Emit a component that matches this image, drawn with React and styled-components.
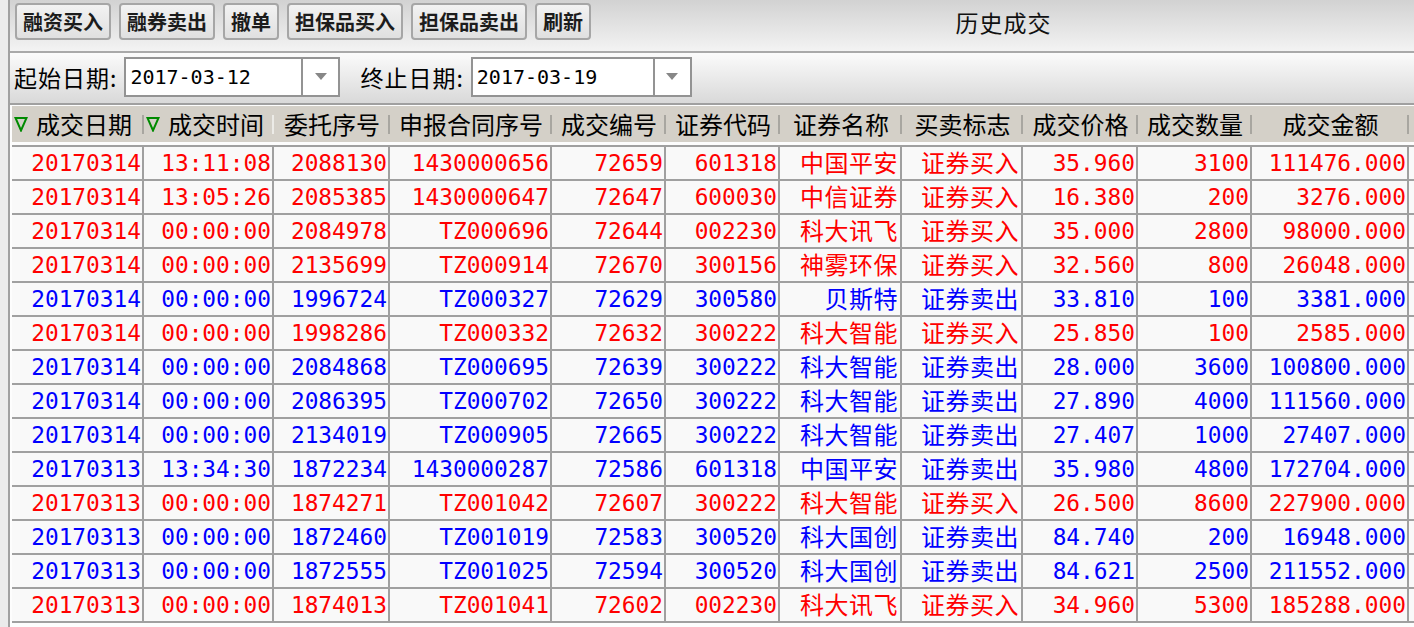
import React from "react";
import styled, { createGlobalStyle } from "styled-components";

const GlobalStyle = createGlobalStyle`
  html, body { margin: 0; padding: 0; background: #ebebeb; }
  body { font-family: "Noto Sans CJK SC", "DejaVu Sans", sans-serif; }
  * { box-sizing: border-box; }
`;

const CJK = `"Noto Sans CJK SC", "DejaVu Sans", sans-serif`;
const MONO = `"DejaVu Sans Mono", "Noto Sans CJK SC", monospace`;

const Page = styled.div`
  margin-left: 8px;
  height: 627px;
  overflow: hidden;
  border-left: 2px solid #a0a0a0;
  display: flex;
  flex-direction: column;
  background: #f4f4f4;
`;

const Toolbar = styled.div`
  height: 53px;
  flex-shrink: 0;
  display: flex;
  align-items: center;
  gap: 8px;
  padding: 0 0 2px 5px;
  background: linear-gradient(#d2d2d2, #f3f3f3);
  border-bottom: 2px solid #a9a9a9;
`;

const ToolButton = styled.button`
  height: 37px;
  padding: 0 6px;
  border: 2px solid #a6a6a6;
  border-radius: 4px;
  background: linear-gradient(#f2f2f2, #e0e0e0);
  font-family: ${CJK};
  font-size: 20px;
  font-weight: 700;
  color: #1c1c1c;
  line-height: 1;
  cursor: pointer;
  margin-bottom: 6px;
`;

const Title = styled.div`
  flex: 1;
  text-align: center;
  font-family: ${CJK};
  font-size: 23px;
  letter-spacing: 1px;
  color: #111;
  margin-bottom: 6px;
  padding-right: 6px;
`;

const DateRow = styled.div`
  height: 52px;
  flex-shrink: 0;
  display: flex;
  align-items: center;
  padding: 0 0 2px 4px;
  background: linear-gradient(#fbfbfb, #d9d9d9);
  border-bottom: 2px solid #a0a0a0;
`;

const DateLabel = styled.span`
  font-family: ${CJK};
  font-size: 23px;
  letter-spacing: 1px;
  color: #000;
  margin-right: 7px;
  margin-left: ${(p) => p.$offset || 0}px;
`;

const Combo = styled.div`
  width: ${(p) => p.$w}px;
  height: 40px;
  display: flex;
  border: 2px solid #939393;
  background: #fff;
`;

const ComboText = styled.div`
  flex: 1;
  display: flex;
  align-items: center;
  padding-left: 4px;
  font-family: ${MONO};
  font-size: 20px;
  color: #000;
  border-right: 2px solid #939393;
`;

const ComboArrow = styled.div`
  width: 35px;
  display: flex;
  align-items: center;
  justify-content: center;
`;

const TableWrap = styled.div`
  flex: 1;
  padding: 1px 0 0 2px;
  background: #fdfdfd;
`;

const cols = "132px 130px 116px 162px 114px 114px 122px 121px 115px 114px 157px 1fr";

const HeaderRow = styled.div`
  display: grid;
  grid-template-columns: ${cols};
  height: 36px;
  background: #d4d0c8;
  margin-bottom: 3px;
`;

const HeaderCell = styled.div`
  position: relative;
  display: flex;
  align-items: center;
  justify-content: ${(p) => (p.$sorted ? "flex-start" : "center")};
  gap: 8px;
  padding-left: ${(p) => (p.$sorted ? "2px" : "0")};
  font-family: ${CJK};
  font-size: 24px;
  line-height: 1;
  color: #000;
  white-space: nowrap;
  &::after {
    content: "";
    position: absolute;
    right: 0;
    top: 9px;
    width: 2px;
    height: 19px;
    background: ${(p) => (p.$light ? "#ecebe7" : "#a8a6a0")};
  }
`;

const Row = styled.div`
  display: grid;
  grid-template-columns: ${cols};
  height: 34px;
  border-top: 2px solid #a0a0a0;
  background: #f9f9f9;
  color: ${(p) => (p.$sell ? "#0000ff" : "#ff0000")};
`;

const Cell = styled.div`
  display: flex;
  align-items: center;
  justify-content: flex-end;
  padding-right: ${(p) => (p.$cjk ? "2px" : "1px")};
  padding-bottom: ${(p) => (p.$cjk ? "3px" : "0")};
  border-right: 2px solid #a0a0a0;
  font-family: ${(p) => (p.$cjk ? CJK : MONO)};
  font-size: ${(p) => (p.$cjk ? "24px" : "22.8px")};
  line-height: 1;
  letter-spacing: ${(p) => (p.$cjk ? "0.5px" : "0")};
  white-space: nowrap;
`;

const EndCell = styled.div``;

const BottomLine = styled.div`
  height: 2px;
  background: #a0a0a0;
`;

const SortIcon = () => (
  <svg width="14" height="16" viewBox="0 0 14 16">
    <polygon points="1.5,2 12.5,2 7,14.5" fill="none" stroke="#008a00" strokeWidth="2" />
  </svg>
);

const DropIcon = () => (
  <svg width="12" height="8" viewBox="0 0 12 8">
    <polygon points="0,0 12,0 6,7" fill="#878787" />
  </svg>
);

const buttons = ["融资买入", "融券卖出", "撤单", "担保品买入", "担保品卖出", "刷新"];

const headers = [
  { t: "成交日期", sorted: true },
  { t: "成交时间", sorted: true, light: true },
  { t: "委托序号" },
  { t: "申报合同序号" },
  { t: "成交编号" },
  { t: "证券代码" },
  { t: "证券名称" },
  { t: "买卖标志" },
  { t: "成交价格" },
  { t: "成交数量" },
  { t: "成交金额" },
];

const data = [
  ["20170314", "13:11:08", "2088130", "1430000656", "72659", "601318", "中国平安", "证券买入", "35.960", "3100", "111476.000"],
  ["20170314", "13:05:26", "2085385", "1430000647", "72647", "600030", "中信证券", "证券买入", "16.380", "200", "3276.000"],
  ["20170314", "00:00:00", "2084978", "TZ000696", "72644", "002230", "科大讯飞", "证券买入", "35.000", "2800", "98000.000"],
  ["20170314", "00:00:00", "2135699", "TZ000914", "72670", "300156", "神雾环保", "证券买入", "32.560", "800", "26048.000"],
  ["20170314", "00:00:00", "1996724", "TZ000327", "72629", "300580", "贝斯特", "证券卖出", "33.810", "100", "3381.000"],
  ["20170314", "00:00:00", "1998286", "TZ000332", "72632", "300222", "科大智能", "证券买入", "25.850", "100", "2585.000"],
  ["20170314", "00:00:00", "2084868", "TZ000695", "72639", "300222", "科大智能", "证券卖出", "28.000", "3600", "100800.000"],
  ["20170314", "00:00:00", "2086395", "TZ000702", "72650", "300222", "科大智能", "证券卖出", "27.890", "4000", "111560.000"],
  ["20170314", "00:00:00", "2134019", "TZ000905", "72665", "300222", "科大智能", "证券卖出", "27.407", "1000", "27407.000"],
  ["20170313", "13:34:30", "1872234", "1430000287", "72586", "601318", "中国平安", "证券卖出", "35.980", "4800", "172704.000"],
  ["20170313", "00:00:00", "1874271", "TZ001042", "72607", "300222", "科大智能", "证券买入", "26.500", "8600", "227900.000"],
  ["20170313", "00:00:00", "1872460", "TZ001019", "72583", "300520", "科大国创", "证券卖出", "84.740", "200", "16948.000"],
  ["20170313", "00:00:00", "1872555", "TZ001025", "72594", "300520", "科大国创", "证券卖出", "84.621", "2500", "211552.000"],
  ["20170313", "00:00:00", "1874013", "TZ001041", "72602", "002230", "科大讯飞", "证券买入", "34.960", "5300", "185288.000"],
];

export default function App() {
  return (
    <>
      <GlobalStyle />
      <Page>
        <Toolbar>
          {buttons.map((b) => (
            <ToolButton key={b}>{b}</ToolButton>
          ))}
          <Title>历史成交</Title>
        </Toolbar>
        <DateRow>
          <DateLabel>起始日期:</DateLabel>
          <Combo $w={216}>
            <ComboText>2017-03-12</ComboText>
            <ComboArrow>
              <DropIcon />
            </ComboArrow>
          </Combo>
          <DateLabel $offset={20}>终止日期:</DateLabel>
          <Combo $w={221}>
            <ComboText>2017-03-19</ComboText>
            <ComboArrow>
              <DropIcon />
            </ComboArrow>
          </Combo>
        </DateRow>
        <TableWrap>
          <HeaderRow>
            {headers.map((h) => (
              <HeaderCell key={h.t} $sorted={h.sorted} $light={h.light}>
                {h.sorted && <SortIcon />}
                {h.t}
              </HeaderCell>
            ))}
            <EndCell />
          </HeaderRow>
          {data.map((r, i) => (
            <Row key={i} $sell={r[7] === "证券卖出"}>
              {r.map((v, j) => (
                <Cell key={j} $cjk={j === 6 || j === 7}>
                  {v}
                </Cell>
              ))}
              <EndCell />
            </Row>
          ))}
          <BottomLine />
        </TableWrap>
      </Page>
    </>
  );
}
